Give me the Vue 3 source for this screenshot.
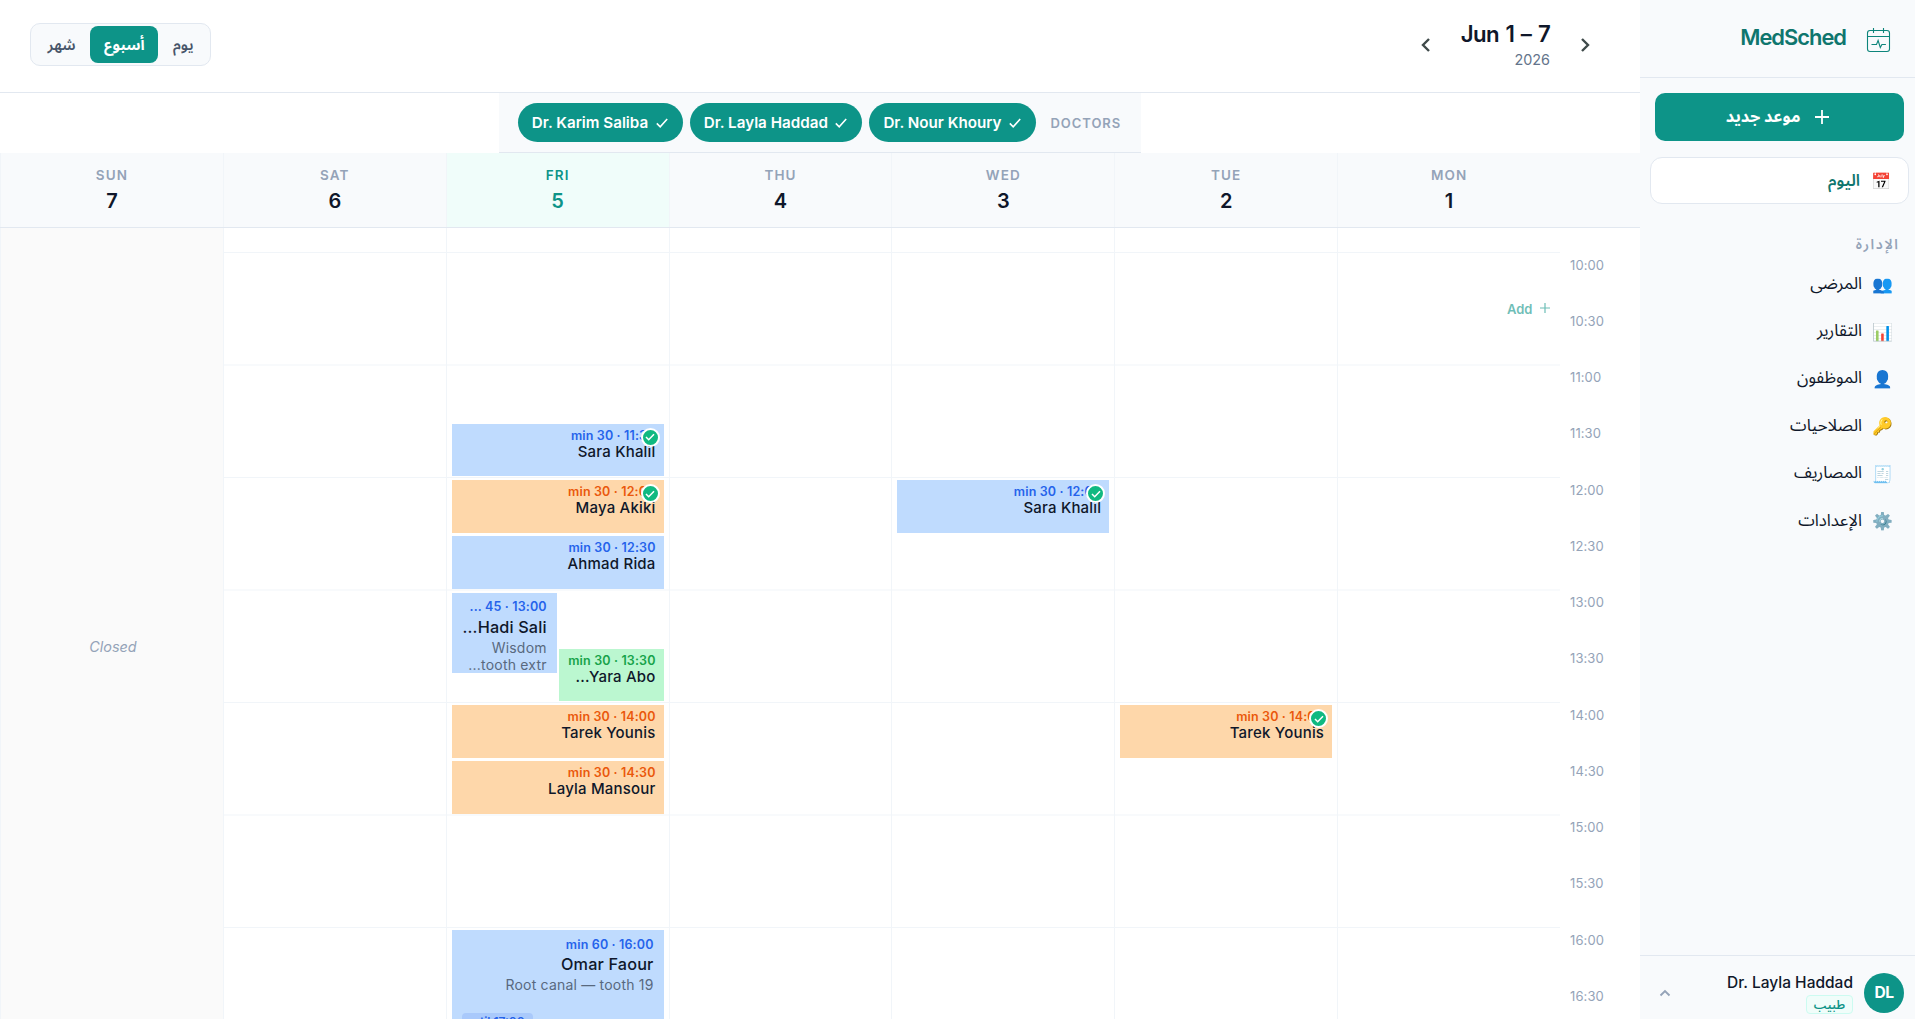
<script setup>
const days = [
  { d: 'MON', n: 1 }, { d: 'TUE', n: 2 }, { d: 'WED', n: 3 }, { d: 'THU', n: 4 },
  { d: 'FRI', n: 5, today: true }, { d: 'SAT', n: 6 }, { d: 'SUN', n: 7, closed: true },
]
const times = ['10:00', '10:30', '11:00', '11:30', '12:00', '12:30', '13:00', '13:30', '14:00', '14:30', '15:00', '15:30', '16:00', '16:30']
const doctors = ['Dr. Nour Khoury', 'Dr. Layla Haddad', 'Dr. Karim Saliba']
// Letter-spacing is ignored for Arabic, so the heading is split at its non-joining letters
const section = ['ا', 'لإ', 'د', 'ا', 'ر', 'ة']
const nav = [
  ['👥', 'المرضى'], ['📊', 'التقارير'], ['👤', 'الموظفون'],
  ['🔑', 'الصلاحيات'], ['🧾', 'المصاريف'], ['⚙️', 'الإعدادات'],
]
const HOUR = 112.5
const events = {
  2: [{ at: 14, min: 30, color: 'orange', time: 'min 30 · 14:00', name: 'Tarek Younis', done: true }],
  3: [{ at: 12, min: 30, color: 'blue', time: 'min 30 · 12:00', name: 'Sara Khalil', done: true }],
  5: [
    { at: 11.5, min: 30, color: 'blue', time: 'min 30 · 11:30', name: 'Sara Khalil', done: true },
    { at: 12, min: 30, color: 'orange', time: 'min 30 · 12:00', name: 'Maya Akiki', done: true },
    { at: 12.5, min: 30, color: 'blue', time: 'min 30 · 12:30', name: 'Ahmad Rida' },
    { at: 13, min: 45, color: 'blue', time: '... 45 · 13:00', name: '...Hadi Sali', note: ['Wisdom', '...tooth extr'], half: 'left' },
    { at: 13.5, min: 30, color: 'green', time: 'min 30 · 13:30', name: '...Yara Abo', half: 'right' },
    { at: 14, min: 30, color: 'orange', time: 'min 30 · 14:00', name: 'Tarek Younis' },
    { at: 14.5, min: 30, color: 'orange', time: 'min 30 · 14:30', name: 'Layla Mansour' },
    { at: 16, min: 60, color: 'blue', time: 'min 60 · 16:00', name: 'Omar Faour', note: ['Root canal — tooth 19'], tag: 'until 17:00' },
  ],
}
const place = (e) => ({ top: 24.5 + (e.at - 10) * HOUR + 2.5 + 'px', height: (e.min / 60) * HOUR - 3.75 + 'px' })
</script>

<template>
  <div class="app">
    <aside class="side">
      <div class="brand">
        <svg width="25" height="27" viewBox="0 0 25 27" fill="none" stroke="#0d857b" stroke-width="1.1">
          <rect x="1.5" y="3.5" width="22" height="21" rx="2.5" />
          <path d="M1.5 9.5h22M7.5 1v5M17.5 1v5M5.5 17.5h5l1.6-4 2.2 7 1.6-3h4" />
        </svg>
        <span>MedSched</span>
      </div>
      <button class="new">
        <svg width="14" height="14" viewBox="0 0 14 14" stroke="#fff" stroke-width="1.8"><path d="M7 0v14M0 7h14" /></svg>
        <span>موعد جديد</span>
      </button>
      <div class="today"><span class="emo">📅</span><span>اليوم</span></div>
      <div class="sec"><span v-for="(s, i) in section" :key="i">{{ s }}</span></div>
      <nav>
        <div v-for="[e, t] in nav" :key="t" class="item"><span class="emo">{{ e }}</span><span class="txt">{{ t }}</span></div>
      </nav>
      <div class="user">
        <div class="avatar">DL</div>
        <div class="who"><b>Dr. Layla Haddad</b><i>طبيب</i></div>
        <svg width="12" height="8" viewBox="0 0 12 8" fill="none" stroke="#94a3b8" stroke-width="1.9"><path d="M1.5 6.5 6 2l4.5 4.5" /></svg>
      </div>
    </aside>

    <main class="main">
      <header class="top">
        <div class="range">
          <svg width="24" height="24" viewBox="0 0 24 24" fill="none" stroke="#3f4a4a" stroke-width="2.4"><path d="m9 6 6 6-6 6" /></svg>
          <div class="label"><b>Jun 1 – 7</b><span>2026</span></div>
          <svg width="24" height="24" viewBox="0 0 24 24" fill="none" stroke="#3f4a4a" stroke-width="2.4"><path d="m15 6-6 6 6 6" /></svg>
        </div>
        <div class="toggle"><button>يوم</button><button class="on">أسبوع</button><button>شهر</button></div>
      </header>

      <div class="filter">
        <span class="cap">DOCTORS</span>
        <span v-for="d in doctors" :key="d" class="chip">
          <svg width="12" height="10" viewBox="0 0 12 10" fill="none" stroke="#fff" stroke-width="1.6"><path d="m.8 5.4 3.4 3.4L11.2 1" /></svg>
          <span dir="ltr">{{ d }}</span>
        </span>
      </div>

      <div class="heads">
        <div class="gutter"></div>
        <div v-for="d in days" :key="d.n" class="head" :class="{ now: d.today }"><span>{{ d.d }}</span><b>{{ d.n }}</b></div>
      </div>

      <div class="grid">
        <div class="gutter times"><div v-for="t in times" :key="t">{{ t }}</div></div>
        <div v-for="d in days" :key="d.n" class="col" :class="{ closed: d.closed }">
          <span v-if="d.closed" class="shut">Closed</span>
          <span v-if="d.n === 1" class="add" dir="ltr">Add <svg width="10" height="10" viewBox="0 0 10 10" stroke="#0d9488" stroke-width="1.2"><path d="M5 0v10M0 5h10" /></svg></span>
          <div v-for="e in events[d.n]" :key="e.at" class="ev" :class="[e.color, e.half, { big: e.note, tall: e.tag }]" :style="place(e)" dir="ltr">
            <div class="t">{{ e.time }}</div>
            <div class="n">{{ e.name }}</div>
            <div v-for="x in e.note" :key="x" class="x">{{ x }}</div>
            <div v-if="e.tag" class="tag">{{ e.tag }}</div>
            <span v-if="e.done" class="done"><svg width="10" height="8" viewBox="0 0 10 8" fill="none" stroke="#fff" stroke-width="1.5"><path d="m1 4 2.7 2.7L9 1.2" /></svg></span>
          </div>
        </div>
      </div>
    </main>
  </div>
</template>

<style>
body { margin: 0; overflow: hidden; }
</style>

<style scoped>
.app { display: flex; direction: rtl; width: 1915px; height: 1019px; overflow: hidden; font-family: Inter, "Noto Sans Arabic", sans-serif; color: #0f172a; background: #fff; box-sizing: border-box; }
.app * { box-sizing: border-box; }
button { font: inherit; border: 0; background: none; padding: 0; color: inherit; }
svg { flex: none; display: block; }

.side { width: 275px; flex: none; background: #f8fafc; display: flex; flex-direction: column; }
.brand { height: 78px; border-bottom: 1px solid #e2e8f0; display: flex; align-items: center; gap: 20px; padding: 4px 24px 0 0; color: #0f766e; font-size: 21.9px; font-weight: 600; letter-spacing: -1px; }
.brand span { margin-top: -7px; }
.new { margin: 15px 11px 0 15px; height: 48px; border-radius: 10px; background: #0d9488; color: #fff; display: flex; align-items: center; justify-content: center; gap: 15px; font-size: 16.25px; font-weight: 700; padding-right: 4px; }
.today { margin: 16px 6px 0 10px; height: 47px; border: 1px solid #e2e8f0; border-radius: 12px; background: #fff; display: flex; align-items: center; gap: 11px; padding-right: 17px; font-size: 16.25px; font-weight: 600; color: #0f766e; }
.emo { font-size: 16.25px; width: 20px; text-align: center; font-weight: 400; }
.sec { margin: 30px 17px 0 0; height: 20px; line-height: 20px; font-size: 14px; font-weight: 600; color: #94a3b8; }
.sec span { margin-left: 1.5px; }
nav { margin-top: 6px; }
.item { height: 47.4px; display: flex; align-items: center; gap: 11px; padding-right: 22px; font-size: 16.8px; }
.item .emo { margin-top: 1px; font-size: 16.8px; }
.item .txt { margin-top: -1px; }
.user { margin-top: auto; height: 64px; border-top: 1px solid #e2e8f0; display: flex; align-items: center; padding: 10px 11px 0 19px; }
.avatar { width: 40px; height: 40px; border-radius: 50%; background: #0d9488; color: #fff; font-size: 15.6px; font-weight: 700; letter-spacing: -.6px; display: flex; align-items: center; justify-content: center; }
.who { flex: 1; display: flex; flex-direction: column; align-items: flex-start; padding: 2px 11px 0 0; gap: 2px; }
.who b { font-size: 15.5px; font-weight: 500; line-height: 20px; }
.who i { font-style: normal; font-size: 12px; font-weight: 600; color: #0d9488; background: #f0fdfa; border: 1px solid #ccfbf1; border-radius: 4px; height: 19px; line-height: 17px; padding: 0 7px; }

.main { flex: 1; min-width: 0; display: flex; flex-direction: column; }
.top { height: 93px; flex: none; border-bottom: 1px solid #e2e8f0; display: flex; align-items: center; justify-content: space-between; padding: 0 43px 3px 30px; }
.range { display: flex; align-items: center; gap: 23px; }
.label { display: flex; flex-direction: column; direction: ltr; text-align: right; }
.label b { font-size: 22.2px; line-height: 28px; font-weight: 600; letter-spacing: -.7px; word-spacing: 1.8px; }
.label span { font-size: 14.4px; line-height: 22px; color: #64748b; position: relative; top: 1px; }
.toggle { display: flex; height: 43px; padding: 2px; border: 1px solid #e2e8f0; border-radius: 10px; background: #f8fafc; }
.toggle button { padding: 0 14.5px; font-size: 15px; font-weight: 600; color: #475569; border-radius: 8px; }
.toggle .on { background: #0d9488; color: #fff; font-weight: 700; padding: 0 14px; }

.filter { height: 60px; flex: none; align-self: center; background: #f8fafc; border-bottom: 1px solid #e2e8f0; display: flex; align-items: center; gap: 7px; padding: 0 19.5px 0 18.5px; }
.cap { font-size: 13px; font-weight: 600; color: #94a3b8; letter-spacing: .95px; margin-left: 7.5px; padding-top: 1px; }
.chip { height: 39px; border-radius: 20px; background: #0d9488; color: #fff; font-size: 15.2px; font-weight: 600; display: flex; align-items: center; gap: 7.5px; padding: 0 15px 0 14px; }

.heads { height: 75px; flex: none; display: flex; background: #f8fafc; border-bottom: 1px solid #e2e8f0; }
.gutter { width: 80px; flex: none; }
.head { flex: 1; border-left: 1px solid #f1f5f9; text-align: center; display: flex; flex-direction: column; padding-top: 13px; }
.head span { font-size: 13.5px; line-height: 19px; font-weight: 600; letter-spacing: 1.1px; color: #94a3b8; }
.head b { font-size: 20px; font-weight: 600; line-height: 32px; }
.head.now { background: #f0fdfa; }
.head.now span, .head.now b { color: #0d9488; }

.grid { flex: 1; min-height: 0; display: flex; overflow: hidden; }
.times { padding: 24.5px 0 0 10px; color: #94a3b8; font-size: 13px; direction: ltr; letter-spacing: .1px; }
.times div { height: 56.25px; line-height: 25.5px; }
.col { flex: 1; position: relative; border-left: 1px solid #f1f5f9; background: repeating-linear-gradient(to bottom, #f1f5f9 0 1px, transparent 1px 112px, #f8fafc 112px 114px, transparent 114px 225px) 0 24px no-repeat; }
.col.closed { background: #fafafa; display: flex; align-items: center; justify-content: center; }
.shut { font-size: 14.4px; font-style: italic; color: #94a3b8; margin-top: 45px; padding-left: 2px; }
.add { position: absolute; right: 10px; top: 73px; font-size: 13px; font-weight: 600; color: #0d9488; opacity: .6; display: flex; align-items: center; gap: 7.5px; }
.add svg { margin-top: -2px; }
.ev { position: absolute; left: 5px; right: 5px; text-align: right; padding: 4px 8px 0; overflow: hidden; white-space: nowrap; }
.ev.left { right: auto; width: 105px; }
.ev.right { left: auto; width: 105px; }
.t { font-size: 12.5px; line-height: 16px; font-weight: 600; letter-spacing: .15px; }
.n { font-size: 15px; line-height: 15px; font-weight: 500; letter-spacing: .2px; }
.big { padding: 6px 10px 0; }
.tall { padding-top: 7px; }
.big .n { font-size: 16.25px; line-height: 24px; letter-spacing: .15px; }
.tall .n { line-height: 23px; }
.x { font-size: 14px; line-height: 17px; color: #475569; opacity: .85; letter-spacing: .2px; }
.blue { background: #bfdbfe; } .blue .t { color: #2563eb; }
.orange { background: #fed7aa; } .orange .t { color: #ea580c; }
.green { background: #bbf7d0; } .green .t { color: #16a34a; }
.tag { position: absolute; left: 10px; top: 83px; width: 71px; height: 22px; line-height: 17px; padding-right: 8px; border-radius: 4px; background: #a9c9fb; color: #2563eb; font-size: 12px; font-weight: 600; }
.done { position: absolute; right: 4px; top: 4px; width: 19px; height: 19px; border-radius: 50%; border: 2px solid #fff; background: #10b981; display: flex; align-items: center; justify-content: center; }
</style>
